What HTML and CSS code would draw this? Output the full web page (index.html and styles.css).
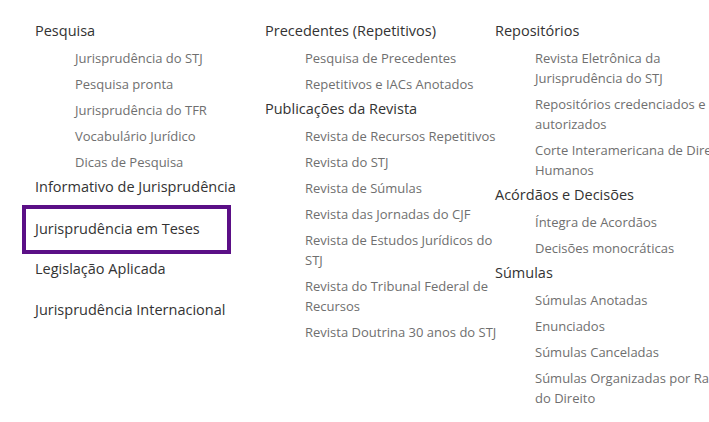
FILE: index.html
```html
<!DOCTYPE html>
<html lang="pt-BR">
<head>
  <meta charset="UTF-8">
  <meta name="viewport" content="width=device-width, initial-scale=1.0">
  <title>Jurisprudência</title>
  <link rel="stylesheet" href="styles.css">
</head>
<body>
  <nav class="menu">
    <div class="menu-col">
      <div class="menu-group">
        <a class="menu-title" href="#">Pesquisa</a>
        <ul class="menu-list">
          <li><a href="#">Jurisprudência do STJ</a></li>
          <li><a href="#">Pesquisa pronta</a></li>
          <li><a href="#">Jurisprudência do TFR</a></li>
          <li><a href="#">Vocabulário Jurídico</a></li>
          <li><a href="#">Dicas de Pesquisa</a></li>
        </ul>
      </div>
      <div class="menu-group">
        <a class="menu-title" href="#">Informativo de Jurisprudência</a>
      </div>
      <a class="menu-title menu-box" href="#">Jurisprudência em Teses</a>
      <a class="menu-title menu-after-box" href="#">Legislação Aplicada</a>
      <a class="menu-title menu-single" href="#">Jurisprudência Internacional</a>
    </div>

    <div class="menu-col">
      <div class="menu-group">
        <a class="menu-title" href="#">Precedentes (Repetitivos)</a>
        <ul class="menu-list">
          <li><a href="#">Pesquisa de Precedentes</a></li>
          <li><a href="#">Repetitivos e IACs Anotados</a></li>
        </ul>
      </div>
      <div class="menu-group">
        <a class="menu-title" href="#">Publicações da Revista</a>
        <ul class="menu-list">
          <li><a href="#">Revista de Recursos Repetitivos</a></li>
          <li><a href="#">Revista do STJ</a></li>
          <li><a href="#">Revista de Súmulas</a></li>
          <li><a href="#">Revista das Jornadas do CJF</a></li>
          <li><a href="#">Revista de Estudos Jurídicos do<br>STJ</a></li>
          <li><a href="#">Revista do Tribunal Federal de<br>Recursos</a></li>
          <li><a href="#">Revista Doutrina 30 anos do STJ</a></li>
        </ul>
      </div>
    </div>

    <div class="menu-col">
      <div class="menu-group">
        <a class="menu-title" href="#">Repositórios</a>
        <ul class="menu-list">
          <li><a href="#">Revista Eletrônica da<br>Jurisprudência do STJ</a></li>
          <li><a href="#">Repositórios credenciados e<br>autorizados</a></li>
          <li><a href="#">Corte Interamericana de Direitos<br>Humanos</a></li>
        </ul>
      </div>
      <div class="menu-group">
        <a class="menu-title" href="#">Acórdãos e Decisões</a>
        <ul class="menu-list">
          <li><a href="#">Íntegra de Acordãos</a></li>
          <li><a href="#">Decisões monocráticas</a></li>
        </ul>
      </div>
      <div class="menu-group">
        <a class="menu-title" href="#">Súmulas</a>
        <ul class="menu-list">
          <li><a href="#">Súmulas Anotadas</a></li>
          <li><a href="#">Enunciados</a></li>
          <li><a href="#">Súmulas Canceladas</a></li>
          <li><a href="#">Súmulas Organizadas por Ramo<br>do Direito</a></li>
        </ul>
      </div>
    </div>
  </nav>
</body>
</html>
```

FILE: styles.css
```css
* {
  margin: 0;
  padding: 0;
  box-sizing: border-box;
}
html,
body {
  overflow: hidden;
}
body {
  background: #fff;
  font-family: "Open Sans", "Noto Sans", sans-serif;
}
a {
  text-decoration: none;
}
.menu {
  display: grid;
  grid-template-columns: 230px 230px 230px;
  padding: 20px 0 0 35px;
}
.menu-col {
  display: flex;
  flex-direction: column;
  align-items: flex-start;
}
.menu-group {
  display: flex;
  flex-direction: column;
  margin-bottom: 4px;
}
.menu-title {
  display: block;
  font-size: 14.5px;
  line-height: 22px;
  color: #333;
  white-space: nowrap;
}
.menu-list {
  list-style: none;
  display: flex;
  flex-direction: column;
  gap: 6px;
  margin-top: 6px;
  padding-left: 40px;
}
.menu-list a {
  display: block;
  font-size: 13px;
  line-height: 20px;
  color: #6f6f6f;
  white-space: nowrap;
}
/* item com foco marcado */
.menu-box {
  width: 209px;
  margin: 3px 0 0 -13px;
  padding: 8px 9px 10px;
  line-height: 23px;
  border: 4px solid #5b0f86;
}
.menu-after-box {
  margin-top: 4px;
}
.menu-single {
  margin-top: 19px;
}
```
